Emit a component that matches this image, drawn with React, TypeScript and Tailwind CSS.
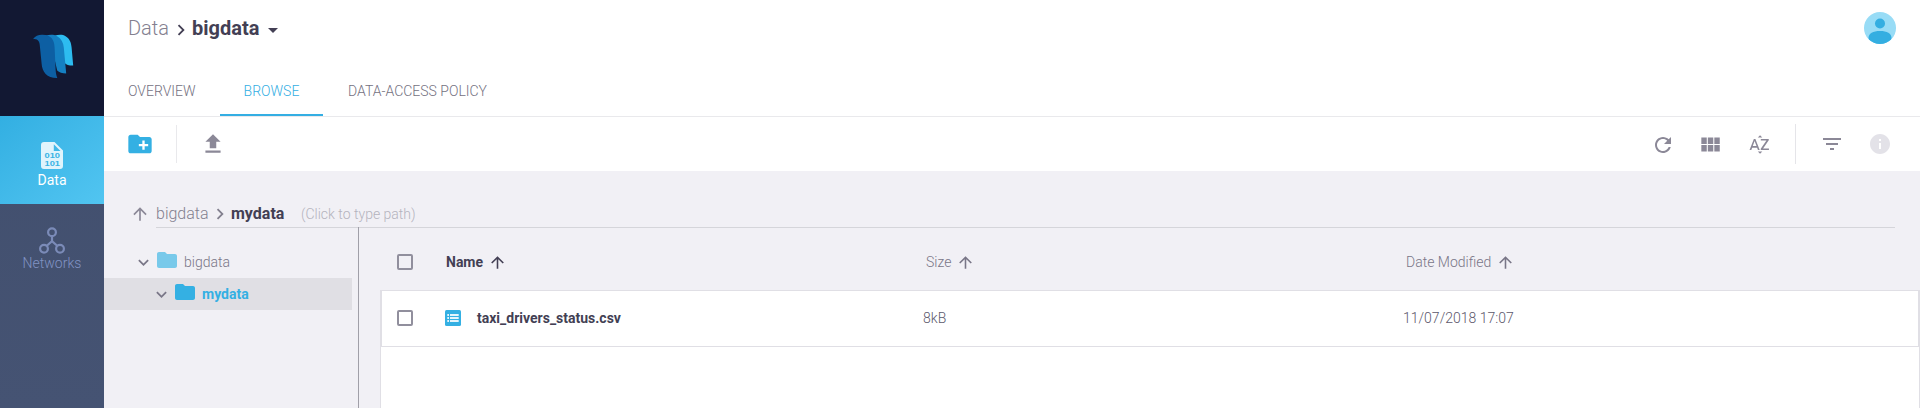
import React from "react";

type IconProps = { d: string; size: number; className?: string };

function Icon({ d, size, className = "" }: IconProps) {
  return (
    <svg width={size} height={size} viewBox="0 0 24 24" fill="currentColor" className={`block shrink-0 ${className}`}>
      <path d={d} />
    </svg>
  );
}

const paths = {
  arrowUp: "M4 12l1.41 1.41L11 7.83V20h2V7.83l5.58 5.59L20 12l-8-8-8 8z",
  chevronRight: "M10 6L8.59 7.41 13.17 12l-4.58 4.59L10 18l6-6z",
  expand: "M16.59 8.59L12 13.17 7.41 8.59 6 10l6 6 6-6z",
  dropDown: "M7 10l5 5 5-5z",
  folder: "M10 4H4c-1.1 0-1.99.9-1.99 2L2 18c0 1.1.9 2 2 2h16c1.1 0 2-.9 2-2V8c0-1.1-.9-2-2-2h-8l-2-2z",
  newFolder:
    "M20 6h-8l-2-2H4c-1.11 0-1.99.89-1.99 2L2 18c0 1.11.89 2 2 2h16c1.11 0 2-.89 2-2V8c0-1.11-.89-2-2-2zm-1 8h-3v3h-2v-3h-3v-2h3V9h2v3h3v2z",
  upload: "M9 16h6v-6h4l-7-7-7 7h4zm-4 2h14v2H5z",
  refresh:
    "M17.65 6.35C16.2 4.9 14.21 4 12 4c-4.42 0-7.99 3.58-7.99 8s3.57 8 7.99 8c3.73 0 6.84-2.55 7.73-6h-2.08c-.82 2.33-3.04 4-5.65 4-3.31 0-6-2.69-6-6s2.69-6 6-6c1.66 0 3.14.69 4.22 1.78L13 11h7V4l-2.35 2.35z",
  module:
    "M4 11h5V5H4v6zm0 7h5v-6H4v6zm6 0h5v-6h-5v6zm6 0h5v-6h-5v6zm-6-7h5V5h-5v6zm6-6v6h5V5h-5z",
  sortAlpha:
    "M14.94 4.66h-4.72l2.36-2.36 2.36 2.36zm-4.69 14.71h4.66l-2.33 2.33-2.33-2.33zM6.1 6.27L1.6 17.73h1.84l.92-2.45h5.11l.92 2.45h1.84L7.74 6.27H6.1zm-1.13 7.37l1.94-5.18 1.94 5.18H4.97zm10.76 2.5h6.12v1.59h-8.53v-1.29l5.92-8.56h-5.88v-1.6h8.3v1.26l-5.93 8.6z",
  filter: "M10 18h4v-2h-4v2zM3 6v2h18V6H3zm3 7h12v-2H6v2z",
  info: "M12 2C6.480 2 2 6.480 2 12s4.480 10 10 10 10-4.480 10-10S17.520 2 12 2zm1 15h-2v-6h2v6zm0-8h-2V7h2v2z",
};

function Logo() {
  return (
    <svg width="42" height="46" viewBox="-0.6 -0.4 42 46" className="block">
      <path d="M22 1.3C26 .2 30 0 33 1.8c4 2.500 5.600 6.200 6 11.200L40.600 31.200c-4 .1-7-1-9-3.200L28 10z" fill="#2dbcf0" />
      <path d="M13 1.300C17 .2 21 0 24.500 1.800c4.200 2.500 6.300 6.200 6.700 11.200l2.400 26c-4 0-7-1-9-3L19 12z" fill="#1580c2" />
      <path d="M.3 4.800C2.500 1.500 6 .3 9.500.4 18 .2 21.700 5 22 13l1 22c.2 3.500.8 6 1.700 8.600C14.500 43.800 9.500 37.500 9 29L7.300 12C7 7 5.300 4 .3 4.800z" fill="#0d5fa3" />
    </svg>
  );
}

function DataIcon() {
  return (
    <svg width="22" height="27" viewBox="0 0 22 27" className="block">
      <path
        fillRule="evenodd"
        d="M3 0h10.500L22 8.500V24a3 3 0 0 1-3 3H3a3 3 0 0 1-3-3V3a3 3 0 0 1 3-3zM12.800 2.300v6.700h6.700z"
        fill="#e0f4fc"
      />
      <g fill="#38b2e4" fontFamily="Liberation Sans, sans-serif" fontWeight="700" fontSize="7.6">
        <text x="3.500" y="16.400" textLength="15.500" lengthAdjust="spacingAndGlyphs">010</text>
        <text x="3.500" y="23.600" textLength="15.500" lengthAdjust="spacingAndGlyphs">101</text>
      </g>
    </svg>
  );
}

function NetworkIcon() {
  return (
    <svg width="26" height="27" viewBox="0 0 26 27" fill="none" stroke="#7b8bb8" strokeWidth="2.2" className="block">
      <circle cx="13" cy="5.200" r="3.900" />
      <circle cx="5" cy="21.700" r="3.900" />
      <circle cx="21" cy="21.700" r="3.900" />
      <path d="M13 9.200v5.300M7.800 18.800L13 14.200l5.200 4.600" />
    </svg>
  );
}

function Checkbox() {
  return <span className="block size-4 shrink-0 rounded-[2px] border-2 border-[#918f9d]" />;
}

function FileIcon() {
  return (
    <svg width="16" height="16" viewBox="0 0 16 16" className="block shrink-0">
      <rect width="16" height="16" rx="1.500" fill="#34b0e3" />
      <path
        d="M2.300 4h1.700v2H2.300zM5 4h8.700v2H5zM2.300 7h1.700v2H2.300zM5 7h8.700v2H5zM2.300 10h1.700v2H2.300zM5 10h8.700v2H5z"
        fill="#e4f5fc"
      />
    </svg>
  );
}

function Sidebar() {
  return (
    <aside className="flex w-[104px] shrink-0 flex-col bg-linear-to-b from-[#414e6c] to-[#455373]">
      <div className="h-[116px] bg-[#121833] pt-[34px] pl-8">
        <Logo />
      </div>
      <div className="flex h-[88px] flex-col items-center bg-linear-to-br from-[#32afe2] to-[#51c5f1] pt-[26px] text-white">
        <DataIcon />
        <span className="mt-px text-sm leading-5">Data</span>
      </div>
      <div className="flex flex-col items-center pt-[23px] text-[#8193c4]">
        <NetworkIcon />
        <span className="-mt-px text-sm leading-5 font-light">Networks</span>
      </div>
    </aside>
  );
}

function Header() {
  return (
    <header className="flex h-[117px] flex-col justify-between border-b border-[#e9e9ec] bg-white">
      <div className="flex h-14 items-center justify-between pr-6 pl-6">
        <div className="flex items-center text-xl leading-6 text-[#433f54]">
          <span className="w-[42px] font-light text-[#83808f]">Data</span>
          <Icon d={paths.chevronRight} size={22} className="mt-[4px]" />
          <span className="w-[68px] font-bold">bigdata</span>
          <Icon d={paths.dropDown} size={24} className="mt-[3px] ml-px" />
        </div>
        <svg width="32" height="32" viewBox="0 0 32 32" className="block">
          <clipPath id="avatar">
            <circle cx="16" cy="16" r="16" />
          </clipPath>
          <g clipPath="url(#avatar)">
            <rect width="32" height="32" fill="#98dcf6" />
            <circle cx="16" cy="11.500" r="5" fill="#34aee1" />
            <path d="M4.500 26c0-4.500 4.500-7 11.500-7s11.500 2.500 11.500 7c0 3-4 8-11.500 8S4.500 29 4.500 26z" fill="#34aee1" />
          </g>
        </svg>
      </div>
      <nav className="flex h-[50px] text-sm leading-5 font-light text-[#747181]">
        <span className="w-[116px] pt-[15px] pl-6">OVERVIEW</span>
        <span className="w-[103px] border-b-2 border-[#34aee3] pt-[15px] text-center text-[#34aee3]">BROWSE</span>
        <span className="pt-[15px] pl-[25px]">DATA-ACCESS POLICY</span>
      </nav>
    </header>
  );
}

function Toolbar() {
  return (
    <div className="flex h-[54px] shrink-0 items-center justify-between bg-white pr-7 pl-[22px] text-[#8b8897]">
      <div className="flex items-center">
        <Icon d={paths.newFolder} size={28} className="text-[#34b0e3]" />
        <span className="ml-[22px] h-[38px] w-px bg-[#e9e9ec]" />
        <Icon d={paths.upload} size={26} className="ml-[23px]" />
      </div>
      <div className="flex items-center">
        <Icon d={paths.refresh} size={24} className="mt-[2px]" />
        <Icon d={paths.module} size={26} className="mt-px ml-[22px]" />
        <Icon d={paths.sortAlpha} size={23} className="ml-[25px]" />
        <span className="ml-6 h-10 w-px bg-[#e5e5e9]" />
        <Icon d={paths.filter} size={24} className="ml-6" />
        <Icon d={paths.info} size={24} className="-mt-px ml-6 text-[#e3e2e8]" />
      </div>
    </div>
  );
}

function PathBar() {
  return (
    <div className="flex h-[57px] shrink-0 items-end pr-[25px] pl-[26px]">
      <Icon d={paths.arrowUp} size={20} className="mb-1 text-[#8b8897]" />
      <div className="ml-[6px] flex h-7 flex-1 items-center border-b border-[#d5d5da] text-base leading-6 text-[#433f54]">
        <span className="w-[53px] font-light text-[#83808f]">bigdata</span>
        <Icon d={paths.chevronRight} size={22} className="mt-px text-[#83808f]" />
        <span className="w-[54px] font-bold">mydata</span>
        <span className="ml-4 text-sm font-light text-[#b4b3bd]">(Click to type path)</span>
      </div>
    </div>
  );
}

function Tree() {
  return (
    <div className="w-[248px] shrink-0 pt-[18px] text-sm leading-5">
      <div className="flex h-8 items-center pl-[29px] text-[#797687]">
        <Icon d={paths.expand} size={21} />
        <Icon d={paths.folder} size={24} className="-mt-1 ml-px text-[#78c9ea]" />
        <span className="ml-[5px] font-light">bigdata</span>
      </div>
      <div className="flex h-8 items-center bg-[#e0dfe4] pl-[47px] text-[#797687]">
        <Icon d={paths.expand} size={21} />
        <Icon d={paths.folder} size={24} className="-mt-1 ml-px text-[#34b0e3]" />
        <span className="ml-[5px] font-bold text-[#34b0e3]">mydata</span>
      </div>
    </div>
  );
}

function FileTable() {
  return (
    <div className="ml-[21px] flex flex-1 flex-col text-sm leading-5 text-[#797687]">
      <div className="flex h-[62px] items-center pt-[6px] pl-[17px]">
        <Checkbox />
        <div className="ml-[33px] flex w-[480px] items-center text-[#433f54]">
          <span className="w-[42px] font-bold">Name</span>
          <Icon d={paths.arrowUp} size={19} />
        </div>
        <div className="flex w-[480px] items-center">
          <span className="w-[30px] font-light">Size</span>
          <Icon d={paths.arrowUp} size={19} />
        </div>
        <div className="flex items-center">
          <span className="w-[90px] font-light">Date Modified</span>
          <Icon d={paths.arrowUp} size={19} />
        </div>
      </div>
      <div className="flex-1 border-x border-[#e0dfe5] bg-white">
        <div className="flex h-[57px] items-center border border-[#e0dfe5] pb-px pl-[15px]">
          <Checkbox />
          <div className="ml-8 flex w-[478px] items-center">
            <FileIcon />
            <span className="ml-4 font-bold text-[#433f54]">taxi_drivers_status.csv</span>
          </div>
          <span className="w-[480px] font-light text-[#5c586b]">8kB</span>
          <span className="font-light text-[#5c586b]">11/07/2018 17:07</span>
        </div>
      </div>
    </div>
  );
}

export default function App() {
  return (
    <div className="flex h-[408px] w-[1920px] overflow-hidden bg-[#f1f0f5] font-['Roboto',sans-serif]">
      <Sidebar />
      <main className="flex min-w-0 flex-1 flex-col">
        <Header />
        <Toolbar />
        <PathBar />
        <div className="flex flex-1">
          <Tree />
          <div className="-mt-px ml-[6px] w-px shrink-0 bg-[#a09fa8]" />
          <FileTable />
        </div>
      </main>
    </div>
  );
}
